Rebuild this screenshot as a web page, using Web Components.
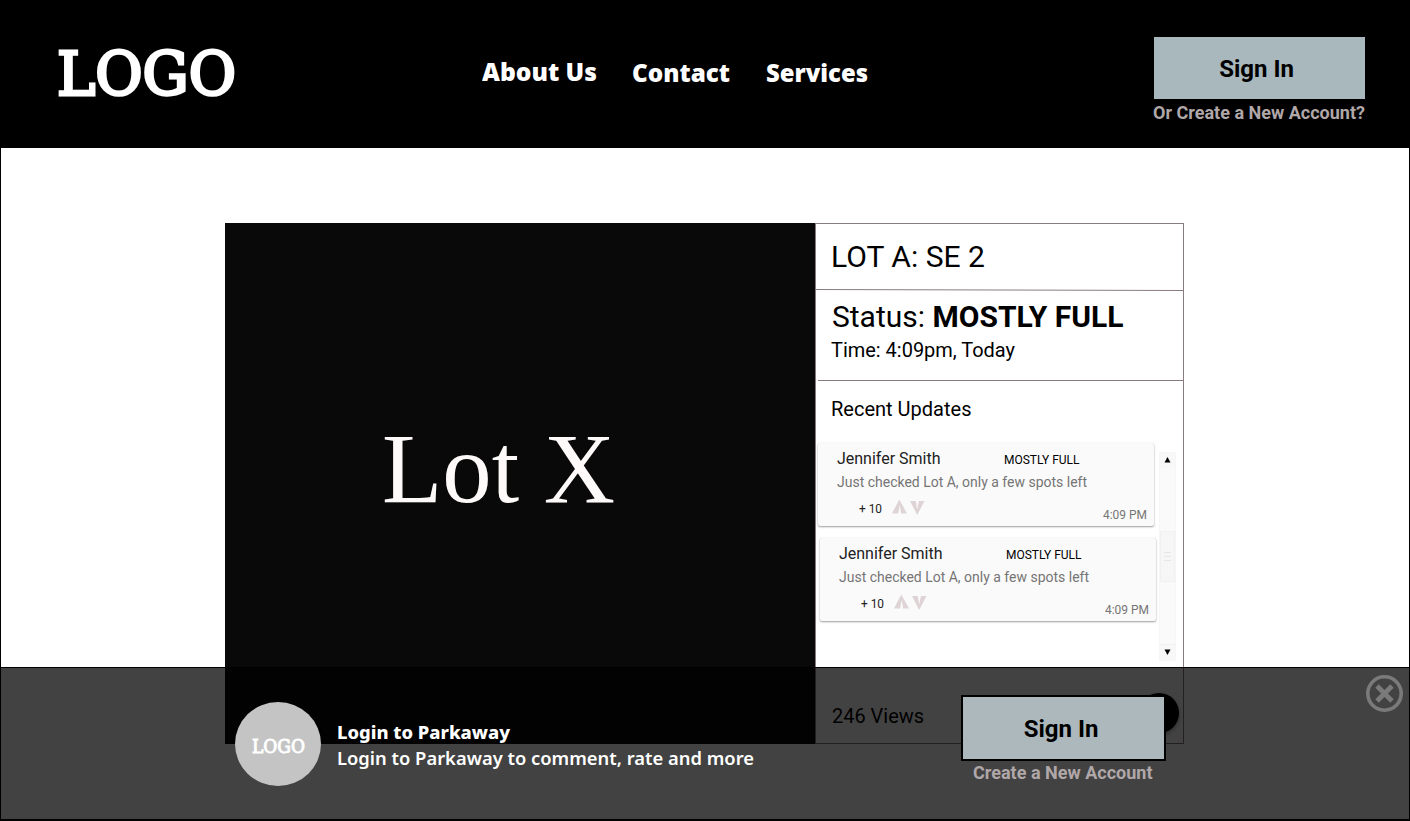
<!DOCTYPE html>
<html lang="en">
<head>
<meta charset="utf-8">
<title>Parkaway</title>
<style>
html,body{margin:0;padding:0;background:#fff}
body{font-family:Roboto,"Liberation Sans",sans-serif;color:#000}
</style>
</head>
<body>
<parkaway-app></parkaway-app>
<script>
const define = (name, html, ready) => {
  const template = document.createElement('template');
  template.innerHTML = html;
  customElements.define(name, class extends HTMLElement {
    constructor() {
      super();
      this.attachShadow({mode: 'open'}).append(template.content.cloneNode(true));
    }
    connectedCallback() { if (ready) ready(this, this.shadowRoot); }
  });
};

/* One line of text stretched to the width given in its w attribute. */
define('fit-text', `<style>
:host{display:block;white-space:nowrap;flex:none}
span{display:inline-block;transform-origin:0 50%;vertical-align:top}
</style><span><slot></slot></span>`, (el, root) => {
  const w = parseFloat(el.getAttribute('w'));
  const span = root.querySelector('span');
  el.style.width = w + 'px';
  const natural = span.getBoundingClientRect().width;
  if (natural) span.style.transform = `scaleX(${w / natural})`;
});

define('brand-logo', `<style>
:host{display:block;font-family:"DejaVu Serif",serif;font-weight:400;color:#fff;-webkit-text-stroke:.052em #fff}
</style><slot></slot>`);

define('action-button', `<style>
:host{display:block}
button{all:unset;box-sizing:border-box;display:flex;align-items:center;justify-content:center;width:100%;height:100%;
background:var(--fill,#a8b8bd);border:var(--edge,0);font:700 24px/30px Roboto,sans-serif;color:#000;padding:2px 6px 0 0}
:host([framed]) button{padding-right:5px}
</style><button><slot></slot></button>`);

define('site-header', `<style>
:host{display:grid;grid-template-columns:424px 1fr 257px;height:148px;background:#000;box-sizing:border-box}
brand-logo{padding-left:57px;font-size:60px;line-height:149px}
nav{display:flex;padding-left:58px;font:900 24.5px/30px "Noto Sans",sans-serif;color:#fff}
nav fit-text{margin-top:57px}
nav fit-text+fit-text{margin-top:58px}
.account{padding-top:37px}
action-button{width:211px;height:62px;margin-left:1px}
fit-text.create{font-weight:700;font-size:18px;line-height:22px;color:#b0a7a9;margin-top:3px}
</style>
<brand-logo><fit-text w="179">LOGO</fit-text></brand-logo>
<nav><fit-text w="115">About Us</fit-text><fit-text w="98" style="margin-left:35px">Contact</fit-text><fit-text w="102" style="margin-left:36px">Services</fit-text></nav>
<div class="account"><action-button>Sign In</action-button><fit-text class="create" w="212">Or Create a New Account?</fit-text></div>`);

define('update-card', `<style>
:host{display:block;box-sizing:border-box;width:336px;height:83px;background:#fafafa;border-radius:2px;
box-shadow:0 1px 2px rgba(0,0,0,.38),0 0 1px rgba(0,0,0,.12);padding:6px 7px 0 19px}
.top{display:flex;height:20px;line-height:20px}
.name{font-size:16px;color:#212121}
.state{font-size:12px;line-height:22px;color:#000}
.msg{font-size:14px;line-height:18px;color:#757575;margin-top:4px}
.foot{display:flex;height:30px;padding-left:22px;font-size:12px;margin-top:3px}
.score{line-height:30px;color:#212121}
svg{margin:5px 0 0 10px}
.time{margin-left:auto;line-height:42px;color:#757575}
</style>
<div class="top"><fit-text class="name" w="103.5"><slot name="name"></slot></fit-text><fit-text class="state" w="75.5" style="margin-left:63.5px"><slot name="state"></slot></fit-text></div>
<fit-text class="msg" w="250"><slot></slot></fit-text>
<div class="foot"><fit-text class="score" w="23"><slot name="score"></slot></fit-text>
<svg width="34" height="17" viewBox="0 0 34 17" fill="#ded4d5"><path d="M0 14.5 7.3 .5 15 14.5H9.2L7.8 6 6.1 14.5Z"/><path d="M18 2H23.8L25.2 10.5 26.9 2H32.5L25.2 16Z"/></svg>
<fit-text class="time" w="44"><slot name="time"></slot></fit-text></div>`);

define('scroll-track', `<style>
:host{display:flex;flex-direction:column;width:17px;height:209px;box-sizing:border-box;background:#fafafa;border:1px solid #f6f6f6}
i{display:flex;align-items:center;justify-content:center;height:15px;background:#f8f8f8;flex:none}
i:first-child{border-bottom:1px solid #f1f1f1}
i:last-child{border-top:1px solid #f1f1f1}
i svg{margin-bottom:1px}
.rest{flex:1}
.thumb{height:51px;box-sizing:border-box;background:#f6f6f6;border:1px solid #f1f1f1;margin-top:63px;display:flex;align-items:center;justify-content:center}
</style><i><svg width="7" height="6"><path d="M3.5 0 6.5 5.5H.5Z"/></svg></i>
<div class="thumb"><svg width="7" height="9" fill="#e6e6e6"><path d="M0 0H7V1H0ZM0 4H7V5H0ZM0 8H7V9H0Z"/></svg></div>
<div class="rest"></div>
<i><svg width="7" height="6"><path d="M.5 .5H6.5L3.5 6Z"/></svg></i>`);

define('lot-panel', `<style>
:host{display:grid;grid-template-columns:590px 369px;width:959px;height:521px}
.photo{background:#090909;color:#fffafa;font:100px/120px "Liberation Serif",serif;padding:186px 0 0 157px}
.info{box-sizing:border-box;border:1px solid #8a7b80;display:flex;flex-direction:column;font-size:20px}
.row{padding-left:15px;box-sizing:border-box;flex:none}
.title{height:65px;padding-top:15px;font-size:30px;line-height:36px}
.line{display:block;height:2px;flex:none;width:367px}
.status{height:89px;padding-top:8px}
.status .a{font-size:30px;line-height:36px;margin-left:1px}
.status .b{line-height:28px;margin-top:1px}
hr{border:0;height:1px;background:#8a7b80;margin:0 0 0 2px;flex:none}
.recent{height:62px;padding-top:14px;line-height:28px}
.feed{display:flex;height:218px;flex:none}
.cards{display:flex;flex-direction:column;gap:12px;width:341px;padding-left:2px;box-sizing:border-box}
update-card+update-card{margin-left:2px}
scroll-track{margin:9px 0 0 2px}
.views{display:flex;padding:32px 4px 0 16px}
.views fit-text{line-height:46px}
.fab{margin-left:auto;width:40px;height:40px;border-radius:50%;background:#000;box-shadow:0 2px 4px rgba(0,0,0,.35)}
</style>
<div class="photo"><fit-text w="233">Lot X</fit-text></div>
<div class="info">
<div class="row title"><fit-text w="154">LOT A: SE 2</fit-text></div>
<svg class="line" height="2" viewBox="0 0 367 2"><path d="M0 .5 367 1.5" stroke="#8a7b80"/></svg>
<div class="row status"><fit-text class="a" w="291.5">Status: <b>MOSTLY FULL</b></fit-text><fit-text class="b" w="184">Time: 4:09pm, Today</fit-text></div>
<hr>
<div class="row recent"><fit-text w="140.5">Recent Updates</fit-text></div>
<div class="feed"><div class="cards">
<update-card><span slot="name">Jennifer Smith</span><span slot="state">MOSTLY FULL</span>Just checked Lot A, only a few spots left<span slot="score">+ 10</span><span slot="time">4:09 PM</span></update-card>
<update-card><span slot="name">Jennifer Smith</span><span slot="state">MOSTLY FULL</span>Just checked Lot A, only a few spots left<span slot="score">+ 10</span><span slot="time">4:09 PM</span></update-card>
</div><scroll-track></scroll-track></div>
<div class="views"><fit-text w="92">246 Views</fit-text><div class="fab"></div></div>
</div>`);

define('login-bar', `<style>
:host{display:flex;box-sizing:border-box;height:154px;background:rgba(0,0,0,.74);border:solid #000;border-width:1px 1px 2px;color:#fff}
.avatar{width:86px;height:84px;border-radius:50%;background:#c4c4c4;margin:34px 0 0 234px;display:flex;justify-content:center;flex:none}
.avatar brand-logo{font-size:18px;line-height:90px}
.copy{font:600 18.5px/26px "Noto Sans",sans-serif;padding:51px 0 0 16px;width:624px;box-sizing:border-box}
.copy .head{font-weight:800}
.cta{padding-top:27px;width:205px;margin-left:16px}
action-button{height:66px;--fill:#adb8bd;--edge:2px solid #000;width:205px}
.cta fit-text{font-size:18px;line-height:22px;font-weight:700;color:#b0a7a9;margin:1px 0 0 12px}
.close{margin:7px 6px 0 auto}
</style>
<div class="avatar"><brand-logo><fit-text w="53">LOGO</fit-text></brand-logo></div>
<div class="copy"><fit-text class="head" w="173">Login to Parkaway</fit-text><fit-text w="417">Login to Parkaway to comment, rate and more</fit-text></div>
<div class="cta"><action-button framed>Sign In</action-button><fit-text w="179.5">Create a New Account</fit-text></div>
<svg class="close" width="37" height="37" viewBox="0 0 37 37" fill="none" stroke="#7a7a7a"><circle cx="18.5" cy="18.5" r="16.7" stroke-width="3.6"/><path d="M11 11 26 26M26 11 11 26" stroke-width="4.8"/></svg>`);

define('parkaway-app', `<style>
:host{display:block;position:relative;width:1410px;height:821px;overflow:hidden;background:#fff}
main{box-sizing:border-box;height:673px;border:solid #000;border-width:0 1px;padding:75px 0 0 224px}
login-bar{position:absolute;left:0;right:0;bottom:0}
</style>
<site-header></site-header>
<main><lot-panel></lot-panel></main>
<login-bar></login-bar>`);
</script>
</body>
</html>
